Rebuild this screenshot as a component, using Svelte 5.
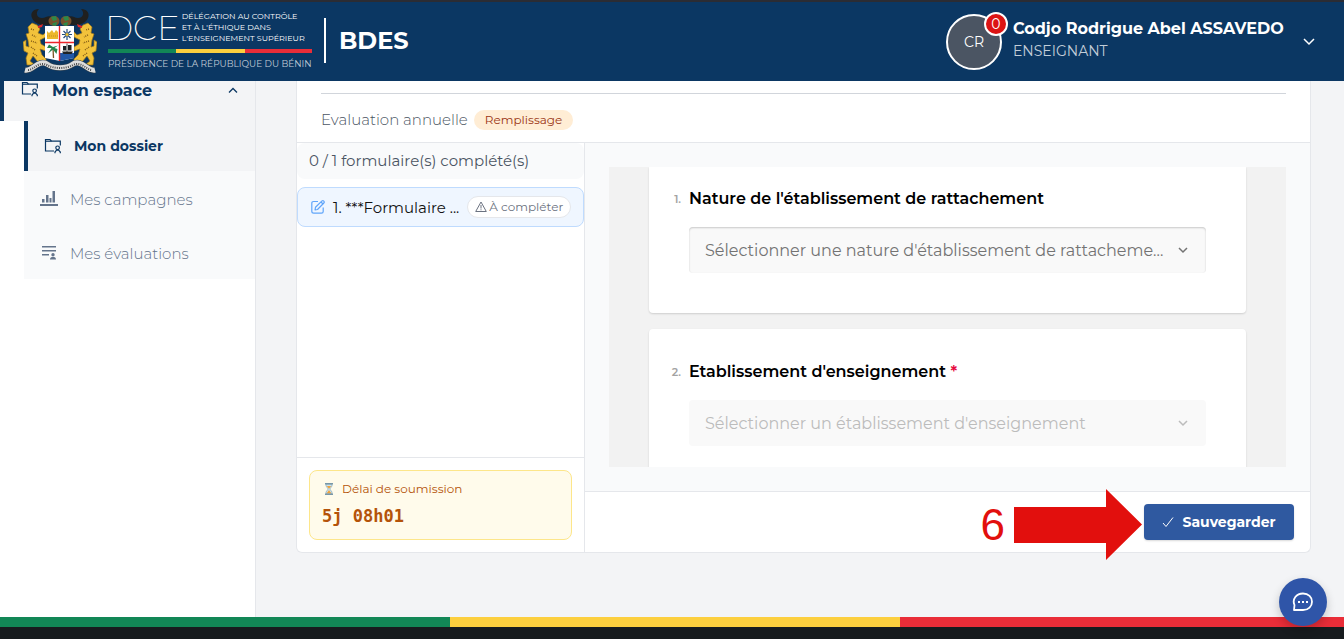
<script>
    const menu = [
        { label: 'Mon dossier', icon: 'folder', active: true },
        { label: 'Mes campagnes', icon: 'chart', active: false },
        { label: 'Mes évaluations', icon: 'list', active: false }
    ];

    const user = {
        initials: 'CR',
        name: 'Codjo Rodrigue Abel ASSAVEDO',
        role: 'ENSEIGNANT',
        notifications: 0
    };

    const questions = [
        {
            id: 'nature',
            label: "Nature de l'établissement de rattachement",
            placeholder: "Sélectionner une nature d'établissement de rattacheme...",
            required: false,
            disabled: false
        },
        {
            id: 'etablissement',
            label: "Etablissement d'enseignement",
            placeholder: "Sélectionner un établissement d'enseignement",
            required: true,
            disabled: true
        }
    ];
</script>

{#snippet folder()}
    <svg width="18" height="16" viewBox="0 0 18 16" fill="none" stroke="currentColor" stroke-width="1.2">
        <path d="M10 13H1.5V1.5H6L7.5 3.2H16.3V7.5" />
        <path d="M1.5 3.2H7.5" />
        <circle cx="13.6" cy="9.8" r="1.8" />
        <path d="M11 15.2V14L12.6 12.2H14.6L16.3 14V15.2" />
    </svg>
{/snippet}

{#snippet chart()}
    <svg width="18" height="16" viewBox="0 0 18 16" fill="currentColor">
        <path d="M0 13H18V15H0ZM2 8H4.5V11.5H2ZM6 4H8.5V11.5H6ZM9.5 7H11.5V11.5H9.5ZM12.5 0H15V11.5H12.5Z" />
    </svg>
{/snippet}

{#snippet list()}
    <svg width="18" height="16" viewBox="0 0 18 16" fill="currentColor">
        <path d="M2 1H16V2.6H2ZM2 5H16V6.6H2ZM2 9H9V10.6H2Z" />
        <circle cx="13" cy="9.8" r="1.7" />
        <path d="M10 14.5C10 12.6 11.3 12 13 12S16 12.6 16 14.5Z" />
    </svg>
{/snippet}

<div class="page">
    <header>
        <a href="/" class="brand">
            <svg class="arms" width="74" height="66" viewBox="0 0 74 66" aria-hidden="true">
                <!-- horns of plenty -->
                <path d="M29 9C31 13 29 17 25 17C18 18 11 15 9 10C7 5 10 1 16 1C12 5 14 10 19 10C23 10 25 7 29 9Z" fill="#20201f" />
                <path d="M45 9C43 13 45 17 49 17C56 18 63 15 65 10C67 5 64 1 58 1C62 5 60 10 55 10C51 10 49 7 45 9Z" fill="#20201f" />
                <ellipse cx="31" cy="13" rx="5.5" ry="5" fill="#78512c" />
                <ellipse cx="43" cy="13" rx="5.5" ry="5" fill="#78512c" />
                <path d="M28 9L33 8L34 12L30 13ZM30 15L34 14L33 18L29 17ZM40 9L45 8L46 12L42 13ZM41 15L45 14L44 18L40 17Z" fill="#2d8a49" />
                <!-- leopards -->
                <path d="M5 19L9 15L14 17L17 21L15 25L20 27L23 24V29L17 32L18 36L23 39V43L17 41L19 47L23 51V56L15 54L10 48L7 53L12 57H4L3 50L5 45L1 43L0 34L3 32V38L6 39L5 32L3 26L6 25Z" fill="#f2c23b" stroke="#9b751d" stroke-width=".7" />
                <path d="M69 19L65 15L60 17L57 21L59 25L54 27L51 24V29L57 32L56 36L51 39V43L57 41L55 47L51 51V56L59 54L64 48L67 53L62 57H70L71 50L69 45L73 43L74 34L71 32V38L68 39L69 32L71 26L68 25Z" fill="#f2c23b" stroke="#9b751d" stroke-width=".7" />
                <path d="M15 18L20 16L19 19L15 20ZM59 18L54 16L55 19L59 20Z" fill="#df2929" />
                <path d="M8 21L11 22M9 27L13 29M8 33L14 35M8 39L12 42M10 45L14 48M66 21L63 22M65 27L61 29M66 33L60 35M66 39L62 42M64 45L60 48" stroke="#815b16" stroke-width="1.4" stroke-dasharray="1 1" />
                <!-- quartered shield -->
                <path d="M22 18H51V50L37 53L22 50Z" fill="#fff" />
                <path d="M37 45H51V50L37 53Z" fill="#2257a6" />
                <path d="M24 31V23L26 25L29 22L31 25L33 22L35 24V31Z" fill="#ecb72b" />
                <path d="M24 28H35" stroke="#c58f1c" stroke-dasharray="1 1" />
                <path d="M44 21V32M39 26.5H49M40.5 23L47.5 30M47.5 23L40.5 30" stroke="#224b7d" stroke-width="1.2" />
                <circle cx="44" cy="26.5" r="1.6" fill="#f0c337" />
                <path d="M30 40L30.5 50" stroke="#7b5424" stroke-width="1.3" />
                <path d="M30 39L26 36.5L24 40L28.5 40L25 45.5L30 41.5L33.5 46L34.5 41L31.5 40L35 37.5Z" fill="#25844a" />
                <path d="M39 43.5H50L48.5 46H40.5ZM40 38H43.2V42.5H40ZM45 37H48.5V42.5H45Z" fill="#202225" />
                <path d="M44 35.5V44" stroke="#202225" stroke-width=".8" />
                <path d="M36.5 18V53M22 34.5H51" stroke="#ed2429" stroke-width="1.4" />
                <!-- motto ribbon -->
                <path d="M2 62C9 64 15 51 24 56C31 61 43 61 50 56C59 51 65 64 72 62" fill="none" stroke="#35434e" stroke-width="6" />
                <path d="M2 62C9 64 15 51 24 56C31 61 43 61 50 56C59 51 65 64 72 62" fill="none" stroke="#ddd" stroke-width="5" />
                <path d="M5 62C11 62 15 53 24 57C31 61 43 61 50 57C59 53 63 62 69 62" fill="none" stroke="#4c4c4c" stroke-width="2" stroke-dasharray="1 1.2" />
            </svg>
            <span class="institution">
                <span class="institution-top">
                    <span class="acronym">DCE</span>
                    <span class="full-name">DÉLÉGATION AU CONTRÔLE<br />ET À L'ÉTHIQUE DANS<br />L'ENSEIGNEMENT SUPÉRIEUR</span>
                </span>
                <span class="flag"></span>
                <span class="presidency">PRÉSIDENCE DE LA RÉPUBLIQUE DU BÉNIN</span>
            </span>
            <span class="app-name">BDES</span>
        </a>
        <button class="account" type="button">
            <span class="avatar">{user.initials}<span class="count">{user.notifications}</span></span>
            <span class="identity">
                <strong>{user.name}</strong>
                <span>{user.role}</span>
            </span>
            <svg width="12" height="8" viewBox="0 0 12 8" fill="none" stroke="currentColor" stroke-width="1.5">
                <path d="M1 1L6 6L11 1" />
            </svg>
        </button>
    </header>

    <div class="body">
        <nav>
            <button class="section" type="button">
                {@render folder()}
                <span>Mon espace</span>
                <svg width="10" height="7" viewBox="0 0 10 7" fill="none" stroke="currentColor" stroke-width="1.3">
                    <path d="M1 5.5L5 1.5L9 5.5" />
                </svg>
            </button>
            <ul>
                {#each menu as item}
                    <li>
                        <a href="/" class:active={item.active}>
                            {#if item.icon === 'folder'}
                                {@render folder()}
                            {:else if item.icon === 'chart'}
                                {@render chart()}
                            {:else}
                                {@render list()}
                            {/if}
                            <span>{item.label}</span>
                        </a>
                    </li>
                {/each}
            </ul>
        </nav>

        <main>
            <section class="card">
                <div class="card-head">
                    <div class="title">
                        <span>Evaluation annuelle</span>
                        <span class="status">Remplissage</span>
                    </div>
                </div>

                <div class="columns">
                    <aside>
                        <p class="progress">0 / 1 formulaire(s) complété(s)</p>
                        <button class="form-item" type="button">
                            <svg width="14" height="14" viewBox="0 0 14 14" fill="none" stroke="#60a5fa" stroke-width="1.2" stroke-linejoin="round">
                                <path d="M7 1.5H2.5Q.8 1.5 .8 3.2V11.3Q.8 13.2 2.7 13.2H10.5Q12.2 13.2 12.2 11.5V7.5" />
                                <path d="M4 10L4.5 7.3L11 .9Q12 .3 12.8 1.1Q13.7 2 12.9 3L6.5 9.5ZM10 2L12 4" />
                            </svg>
                            <span class="form-name">1. ***Formulaire ...</span>
                            <span class="todo">
                                <svg width="12" height="12" viewBox="0 0 12 12" fill="none" stroke="currentColor" stroke-linejoin="round">
                                    <path d="M6 1L11.3 10.5H.7ZM6 4V7.5M6 8.3V9.3" />
                                </svg>
                                À compléter
                            </span>
                        </button>
                        <div class="deadline">
                            <div class="deadline-box">
                                <p>
                                    <svg width="14" height="14" viewBox="0 0 14 14">
                                        <path d="M4 2H10V4L7.8 7L10 10V12H4V10L6.2 7L4 4Z" fill="#cbe3ee" stroke="#8ca9b7" stroke-width=".7" />
                                        <path d="M4.8 4H9.2L7 6.8ZM7 8L9.5 11.5H4.5Z" fill="#f0a33b" />
                                        <path d="M3 1H11V2.5H3ZM3 11.5H11V13H3Z" fill="#7897a8" />
                                    </svg>
                                    Délai de soumission
                                </p>
                                <strong>5j 08h01</strong>
                            </div>
                        </div>
                    </aside>

                    <div class="content">
                        <div class="survey-wrap">
                            <div class="survey">
                                {#each questions as q, i}
                                    <div class="question">
                                        <label for={q.id}>
                                            <span class="number">{i + 1}.</span>
                                            {q.label}
                                            {#if q.required}<span class="required">*</span>{/if}
                                        </label>
                                        <div class="select">
                                            <select id={q.id} disabled={q.disabled}>
                                                <option>{q.placeholder}</option>
                                            </select>
                                            <svg width="10" height="7" viewBox="0 0 10 7" fill="none" stroke="currentColor" stroke-width="1.5">
                                                <path d="M1 1L5 5L9 1" />
                                            </svg>
                                        </div>
                                    </div>
                                {/each}
                            </div>
                        </div>
                        <div class="actions">
                            <div class="save-wrap">
                                <div class="step">
                                    <span>6</span>
                                    <svg width="128" height="72" viewBox="0 0 128 72">
                                        <path d="M0 18H92V0L128 35.5L92 71V54H0Z" fill="#e20f0d" />
                                    </svg>
                                </div>
                                <button class="save" type="button">
                                    <svg width="12" height="12" viewBox="0 0 12 12" fill="none" stroke="currentColor">
                                        <path d="M1 7L4 10.5L11 1.5" />
                                    </svg>
                                    Sauvegarder
                                </button>
                            </div>
                        </div>
                    </div>
                </div>
            </section>
        </main>
    </div>

    <footer><span class="flag"></span></footer>

    <button class="chat" type="button" aria-label="Chat">
        <svg width="22" height="22" viewBox="0 0 22 22" fill="none" stroke="currentColor" stroke-width="1.8" stroke-linejoin="round">
            <path d="M2 19L2.5 14C-.2 8 4.5 2.5 11 2.5C16.5 2.5 20 6.2 20 10.7C20 15.3 16.5 19 11 19Z" />
            <path d="M6 11H8M10 11H12M14 11H16" stroke-width="2" />
        </svg>
    </button>
</div>

<style>
    :global(body) {
        background: #f3f4f6;
    }

    .page {
        min-height: 100vh;
        display: flex;
        flex-direction: column;
        font-family: Montserrat, Inter, sans-serif;
        font-size: 14px;
        color: #4b5563;
    }

    .page, .page * {
        box-sizing: border-box;
    }

    button {
        font: inherit;
        color: inherit;
        background: none;
        border: 0;
        padding: 0;
        cursor: pointer;
        text-align: left;
    }

    a {
        color: inherit;
        text-decoration: none;
    }

    p, ul {
        margin: 0;
        padding: 0;
        list-style: none;
    }

    svg {
        flex: none;
    }

    header {
        display: flex;
        align-items: center;
        justify-content: space-between;
        height: 81px;
        padding: 0 29px 0 23px;
        background: #0b3763;
        border-top: 2px solid #2b2c34;
        color: white;
    }

    .brand {
        display: flex;
        align-items: center;
        padding-bottom: 2px;
    }

    .institution {
        display: flex;
        flex-direction: column;
        width: 204px;
        margin: 0 12px 0 11px;
        white-space: nowrap;
    }

    .institution-top {
        display: flex;
        align-items: flex-start;
        gap: 2px;
        height: 38px;
    }

    .acronym {
        margin-left: -3px;
        font-size: 34px;
        line-height: 34px;
        font-weight: 200;
    }

    .full-name {
        font-size: 8px;
        line-height: 11px;
    }

    .flag {
        display: block;
        height: 4px;
        background: linear-gradient(to right, #128756 33.5%, #fccf3e 33.5% 67%, #e92d38 67%);
    }

    .presidency {
        margin-top: 4px;
        font-size: 9px;
        line-height: 14px;
        color: #c2cdd8;
    }

    .app-name {
        padding-left: 13px;
        border-left: 2px solid white;
        font-size: 24px;
        line-height: 45px;
        font-weight: 700;
    }

    .account {
        display: flex;
        align-items: center;
        gap: 11px;
    }

    .avatar {
        position: relative;
        display: grid;
        place-items: center;
        width: 56px;
        height: 56px;
        border: 2px solid white;
        border-radius: 50%;
        background: #4b5563;
    }

    .count {
        position: absolute;
        top: -4px;
        right: -8px;
        width: 24px;
        border: 2px solid white;
        border-radius: 50%;
        background: #dc1414;
        font-size: 14px;
        line-height: 20px;
        text-align: center;
    }

    .identity {
        display: flex;
        flex-direction: column;
        min-width: 279px;
        padding-bottom: 3px;
        line-height: 22px;
        color: #c2cdd8;
    }

    .identity strong {
        font-size: 16px;
        color: white;
    }

    .body {
        flex: 1;
        display: flex;
    }

    nav {
        flex: none;
        width: 256px;
        background: white;
        border-right: 1px solid #e5e7eb;
    }

    .section {
        display: flex;
        align-items: flex-start;
        gap: 13px;
        width: 100%;
        height: 40px;
        padding: 0 17px;
        border-left: 4px solid #0b3763;
        background: #f3f4f6;
        color: #0b3763;
        font-size: 16px;
        line-height: 19px;
        font-weight: 700;
    }

    .section span {
        flex: 1;
    }

    .section svg:last-child {
        margin-top: 6px;
    }

    nav ul {
        margin-left: 24px;
        background: #f9fafb;
    }

    nav li a {
        display: flex;
        align-items: center;
        gap: 12px;
        height: 54px;
        padding: 2px 16px 0;
        color: #64748b;
        font-size: 15px;
        font-weight: 300;
    }

    nav li a.active {
        height: 50px;
        padding-top: 0;
        border-left: 4px solid #0b3763;
        background: #f3f4f6;
        color: #0b3763;
        font-size: 14px;
        font-weight: 700;
    }

    main {
        flex: 1;
        min-width: 0;
        padding: 0 33px 64px 40px;
    }

    .card {
        background: white;
        border: 1px solid #e5e7eb;
        border-top: 0;
        border-radius: 0 0 6px 6px;
    }

    .card-head {
        padding: 12px 24px;
        border-bottom: 1px solid #e5e7eb;
    }

    .title {
        display: flex;
        align-items: center;
        gap: 6px;
        padding-top: 16px;
        border-top: 1px solid #d1d5db;
        font-size: 15px;
        line-height: 20px;
        font-weight: 300;
    }

    .status {
        padding: 0 11px;
        border-radius: 10px;
        background: #ffedd5;
        color: #9a3412;
        font-size: 12px;
        font-weight: 400;
    }

    .columns {
        display: flex;
    }

    aside {
        flex: none;
        display: flex;
        flex-direction: column;
        width: 288px;
        border-right: 1px solid #e5e7eb;
    }

    .progress {
        margin-bottom: 8px;
        padding: 0 12px;
        border-radius: 8px;
        background: #f9fafb;
        font-size: 15px;
        line-height: 36px;
    }

    .form-item {
        display: flex;
        align-items: center;
        gap: 8px;
        height: 40px;
        padding: 0 12px 0 13px;
        border: 1px solid #bfdbfe;
        border-radius: 8px;
        background: #eff6ff;
    }

    .form-name {
        flex: 1;
        color: #111;
        font-size: 15px;
        white-space: nowrap;
    }

    .todo {
        display: flex;
        align-items: center;
        gap: 2px;
        padding: 0 7px;
        border: 1px solid #e5e7eb;
        border-radius: 11px;
        background: white;
        color: #6b7280;
        font-size: 12px;
        line-height: 20px;
        white-space: nowrap;
    }

    .deadline {
        margin-top: auto;
        padding: 12px;
        border-top: 1px solid #e5e7eb;
    }

    .deadline-box {
        padding: 8px 12px;
        height: 70px;
        border: 1px solid #fde68a;
        border-radius: 8px;
        background: #fffbeb;
        color: #b45309;
    }

    .deadline-box p {
        display: flex;
        align-items: center;
        gap: 6px;
        margin-bottom: 7px;
        font-size: 12px;
        line-height: 20px;
    }

    .deadline-box strong {
        display: block;
        font: 700 17px/20px "DejaVu Sans Mono", monospace;
    }

    .content {
        flex: 1;
        min-width: 0;
    }

    .survey-wrap {
        padding: 24px;
        background: #f9fafb;
    }

    .survey {
        height: 300px;
        padding: 0 40px;
        overflow: hidden;
        background: #f2f2f2;
    }

    .question {
        margin-bottom: 16px;
        padding: 32px 40px 40px;
        border-radius: 4px;
        background: white;
        box-shadow: 0 1px 2px rgba(0, 0, 0, 0.15);
    }

    .question:first-child {
        padding-top: 21px;
        border-radius: 0 0 4px 4px;
    }

    label {
        position: relative;
        display: block;
        margin-bottom: 17px;
        color: black;
        font-size: 16px;
        line-height: 22px;
        font-weight: 600;
    }

    .number {
        position: absolute;
        right: 100%;
        margin-right: 8px;
        color: #a3a3a3;
        font-size: 11px;
    }

    .required {
        color: #e60a3e;
    }

    .select {
        display: grid;
        align-items: center;
        color: #737373;
    }

    .select select, .select svg {
        grid-area: 1 / 1;
    }

    .select svg {
        justify-self: end;
        margin-right: 18px;
        pointer-events: none;
    }

    select {
        appearance: none;
        width: 100%;
        height: 46px;
        padding: 0 34px 0 16px;
        border: 0;
        border-radius: 4px;
        background: #f9f9f9;
        box-shadow: inset 0 1px 2px rgba(0, 0, 0, 0.2);
        color: inherit;
        font: inherit;
        font-size: 16px;
        text-overflow: ellipsis;
    }

    select:disabled {
        box-shadow: none;
        opacity: 1;
    }

    .select:has(select:disabled) {
        color: #bcbcbc;
    }

    .actions {
        display: flex;
        justify-content: flex-end;
        padding: 12px 16px;
        border-top: 1px solid #e5e7eb;
    }

    .save-wrap {
        position: relative;
    }

    .save {
        display: flex;
        align-items: center;
        justify-content: center;
        gap: 8px;
        min-width: 150px;
        height: 36px;
        border-radius: 4px;
        background: #2f59a0;
        box-shadow: 0 1px 2px rgba(0, 0, 0, 0.15);
        color: white;
        font-weight: 700;
    }

    /* tutorial marker pointing at the save button */
    .step {
        position: absolute;
        right: 100%;
        top: -15px;
        display: flex;
        align-items: center;
        gap: 9px;
        margin-right: 2px;
        color: #e20f0d;
        font: 44px/44px "Liberation Sans", Arial, sans-serif;
    }

    footer {
        background: #171b1e;
        padding-bottom: 12px;
    }

    footer .flag {
        height: 10px;
    }

    .chat {
        position: fixed;
        right: 17px;
        bottom: 13px;
        display: grid;
        place-items: center;
        width: 48px;
        height: 48px;
        border-radius: 50%;
        background: #2f55a8;
        box-shadow: 0 4px 10px rgba(0, 0, 0, 0.2);
        color: white;
    }
</style>
